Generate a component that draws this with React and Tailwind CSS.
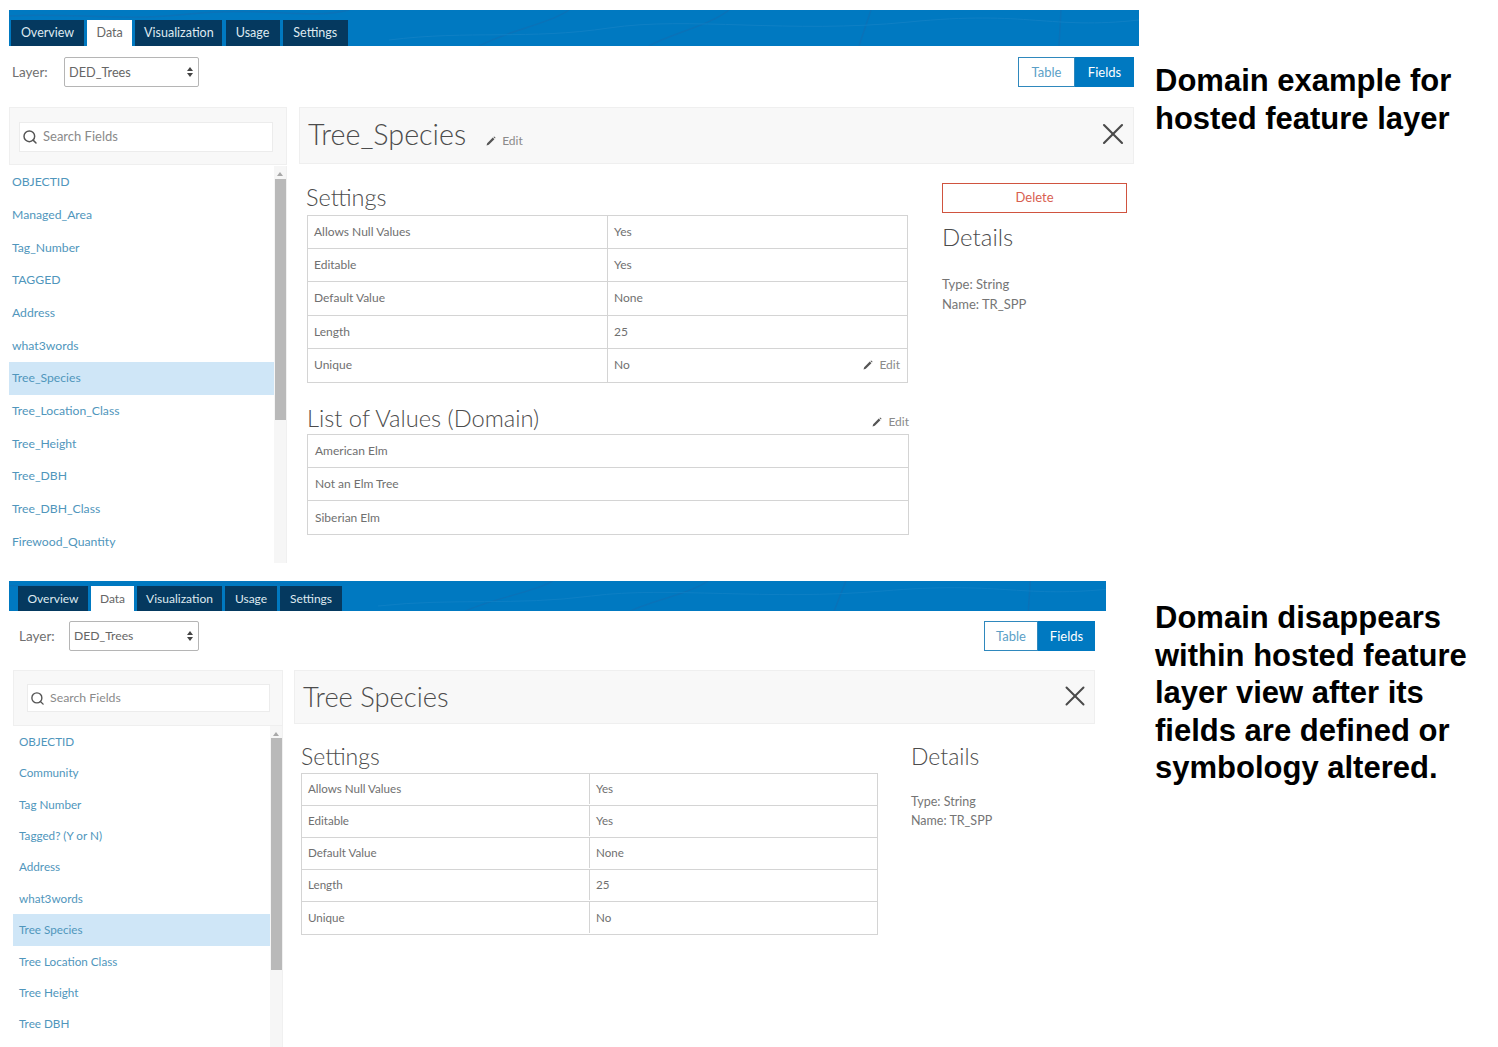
import { Search, X } from 'lucide-react';

const tabs = ['Overview', 'Data', 'Visualization', 'Usage', 'Settings'];

const fieldsTop = ['OBJECTID', 'Managed_Area', 'Tag_Number', 'TAGGED', 'Address', 'what3words', 'Tree_Species', 'Tree_Location_Class', 'Tree_Height', 'Tree_DBH', 'Tree_DBH_Class', 'Firewood_Quantity'];
const fieldsBottom = ['OBJECTID', 'Community', 'Tag Number', 'Tagged? (Y or N)', 'Address', 'what3words', 'Tree Species', 'Tree Location Class', 'Tree Height', 'Tree DBH'];

const settings = [
  ['Allows Null Values', 'Yes'],
  ['Editable', 'Yes'],
  ['Default Value', 'None'],
  ['Length', '25'],
  ['Unique', 'No'],
];

const domain = ['American Elm', 'Not an Elm Tree', 'Siberian Elm'];

function Pencil() {
  return (
    <svg width="10" height="10" viewBox="0 0 10 10" className="shrink-0">
      <path d="M0.5 9.5 L1.2 7.2 L6.8 1.6 L8.4 3.2 L2.8 8.8 Z M7.4 1 L8.2 0.4 L9.6 1.8 L9 2.6 Z" fill="#555" />
    </svg>
  );
}

function Edit({ className }) {
  return (
    <span className={`flex items-center gap-[6px] text-[12px] text-[#8a8a8a] ${className}`}>
      <Pencil />
      Edit
    </span>
  );
}

function BarLines() {
  return (
    <svg className="absolute inset-0 w-full h-full" preserveAspectRatio="none" viewBox="0 0 1130 36">
      <path d="M0 6 C60 2 110 12 180 4 S300 10 340 0 M470 36 C500 20 540 14 560 0 M640 36 C660 24 700 16 720 0 M850 36 L862 0 M1050 36 L1052 0" fill="none" stroke="#0a72b8" strokeWidth="1.5" />
      <path d="M380 30 C460 20 520 30 600 18 S780 24 900 12 S1040 20 1130 10" fill="none" stroke="#0f80c5" strokeWidth="1" />
    </svg>
  );
}

function TabBar({ barClass, tabClass, tabClasses }) {
  return (
    <div className={`relative flex items-end bg-[#0079c1] overflow-hidden ${barClass}`}>
      <BarLines />
      {tabs.map((t, i) => (
        <div
          key={t}
          className={`relative flex items-center justify-center pt-[1px] ${tabClass} ${tabClasses[i]} ${t === 'Data' ? 'bg-white text-[#666]' : 'bg-[#05395f] text-[#dfe9f0]'}`}
        >
          {t}
        </div>
      ))}
    </div>
  );
}

function SelectBox({ className }) {
  return (
    <div className={`flex items-center justify-between h-[30px] border border-[#b5b5b5] rounded-[2px] pl-[4px] pr-[5px] text-[#666] ${className}`}>
      <span className="pt-[1px]">DED_Trees</span>
      <svg width="6" height="10" viewBox="0 0 6 10">
        <path d="M3 0 L6 4 H0 Z M0 6 H6 L3 10 Z" fill="#444" />
      </svg>
    </div>
  );
}

function Toggle({ tableClass, fieldsClass }) {
  return (
    <div className="flex h-[30px] text-[13px]">
      <div className={`flex items-center justify-center pt-[1px] border border-[#2f88bd] text-[#5b9fc7] ${tableClass}`}>Table</div>
      <div className={`flex items-center justify-center pt-[1px] bg-[#0079c1] text-white ${fieldsClass}`}>Fields</div>
    </div>
  );
}

function Sidebar({ width, headClass, searchClass, iconSize, items, itemClass, selected, listClass, thumbClass }) {
  return (
    <div className={`shrink-0 ${width}`}>
      <div className={`flex items-center bg-[#f8f8f8] border border-[#efefef] ${headClass}`}>
        <div className={`flex items-center bg-white border border-[#ececec] text-[#8a8a8a] ${searchClass}`}>
          <Search size={iconSize} strokeWidth={2.2} color="#555" className="shrink-0" />
          <span className="ml-[5px] pt-[1px]">Search Fields</span>
        </div>
      </div>
      <div className={`flex overflow-hidden ${listClass}`}>
        <div className="flex-1 overflow-hidden">
          {items.map((f) => (
            <div
              key={f}
              className={`flex items-center text-[#5096bc] ${itemClass} ${f === selected ? 'bg-[#cfe6f7]' : ''}`}
            >
              {f}
            </div>
          ))}
        </div>
        <div className="shrink-0 w-[12px] bg-[#f6f6f6]">
          <div className="flex justify-center pt-[6px] h-[14px]">
            <svg width="6" height="4" viewBox="0 0 6 4"><path d="M3 0 L6 4 H0 Z" fill="#a8a8a8" /></svg>
          </div>
          <div className={`bg-[#b9b9b9] ml-[1px] ${thumbClass}`} />
        </div>
        <div className="w-[1px] bg-[#f0f0f0]" />
      </div>
    </div>
  );
}

function Row({ children, className, last }) {
  return (
    <div className={`flex items-center text-[#707070] ${className} ${last ? '' : 'border-b border-[#d4d4d4]'}`}>
      {children}
    </div>
  );
}

function SettingsTable({ width, rowClass, labelWidth, edit }) {
  return (
    <div className={`border border-[#d4d4d4] ${width}`}>
      {settings.map(([k, v], i) => (
        <Row key={k} className={rowClass} last={i === settings.length - 1}>
          <div className={`flex items-center h-full pl-[6px] border-r border-[#d4d4d4] ${labelWidth}`}>{k}</div>
          <div className="flex flex-1 items-center justify-between pl-[6px] pr-[7px]">
            {v}
            {edit && i === settings.length - 1 && <Edit className="text-[12.5px]" />}
          </div>
        </Row>
      ))}
    </div>
  );
}

function Details({ headClass, lineClass }) {
  return (
    <>
      <div className={`font-light leading-[30px] text-[#4c4c4c] ${headClass}`}>Details</div>
      <div className={`text-[#757575] ${lineClass}`}>Type: String</div>
      <div className={`text-[#757575] ${lineClass}`}>Name: TR_SPP</div>
    </>
  );
}

function Note({ children, className }) {
  return (
    <div className={`font-['Liberation_Sans',Arial,sans-serif] font-bold text-[31px] text-black ${className}`}>
      {children}
    </div>
  );
}

export default function App() {
  return (
    <div className="w-[1498px] h-[1047px] overflow-hidden bg-white font-['Lato','Open_Sans',sans-serif]">
      {/* hosted feature layer */}
      <section className="flex h-[581px] pl-[9px] pt-[10px]">
        <div className="w-[1146px] shrink-0">
          <TabBar
            barClass="w-[1130px] h-[36px] pl-[2px] gap-[3.2px]"
            tabClass="h-[26px] text-[12.5px]"
            tabClasses={['w-[73px]', 'w-[45px]', 'w-[87px]', 'w-[54px]', 'w-[65px]']}
          />
          <div className="flex items-center justify-between w-[1125px] mt-[11px]">
            <div className="flex items-center">
              <span className="w-[55px] pl-[3px] text-[13.5px] text-[#707070]">Layer:</span>
              <SelectBox className="w-[135px] text-[12.7px]" />
            </div>
            <Toggle tableClass="w-[57px]" fieldsClass="w-[59px]" />
          </div>
          <div className="flex gap-[12px] w-[1125px] mt-[20px]">
            <Sidebar
              width="w-[278px]"
              headClass="h-[58px] pl-[9px] pt-[1px]"
              searchClass="w-[254px] h-[30px] text-[13px] pl-[2px]"
              iconSize={16}
              items={fieldsTop}
              selected="Tree_Species"
              itemClass="h-[32.7px] pl-[3px] text-[12.2px]"
              listClass="h-[398px] pt-[1px]"
              thumbClass="h-[241px] -mt-[1px]"
            />
            <div className="flex-1">
              <div className="flex items-center justify-between h-[57px] bg-[#f8f8f8] border border-[#efefef] pl-[8px] pr-[2px]">
                <div className="flex items-center">
                  <span className="-mt-[1px] text-[28.7px] font-light text-[#4c4c4c]">Tree_Species</span>
                  <Edit className="ml-[20px] mt-[11px]" />
                </div>
                <X size={36} strokeWidth={1.4} color="#4a4a4a" className="-mt-[3px]" />
              </div>
              <div className="flex pl-[7px] pt-[18px]">
                <div className="w-[636px] shrink-0">
                  <div className="h-[33px] text-[23.5px] font-light leading-[30px] text-[#4c4c4c]">Settings</div>
                  <div className="pl-[1px]">
                    <SettingsTable width="w-[601px]" rowClass="h-[33.2px] text-[12px]" labelWidth="w-[300px]" edit />
                    <div className="flex items-end justify-between w-[602px] h-[51px]">
                      <span className="-mt-[1px] pb-[1px] text-[23.7px] font-light leading-[30px] text-[#4c4c4c]">List of Values (Domain)</span>
                      <Edit className="mb-[3px]" />
                    </div>
                    <div className="w-[602px] border border-[#d4d4d4]">
                      {domain.map((d, i) => (
                        <Row key={d} className="h-[33px] pl-[7px] pt-[1px] text-[12px]" last={i === domain.length - 1}>{d}</Row>
                      ))}
                    </div>
                  </div>
                </div>
                <div className="w-[185px] pt-[1px]">
                  <div className="flex items-center justify-center h-[30px] border border-[#d0533f] text-[13px] text-[#d8604f]">Delete</div>
                  <div className="mt-[9px]">
                    <Details headClass="text-[24px] mb-[22px]" lineClass="h-[20px] leading-[20px] text-[13px]" />
                  </div>
                </div>
              </div>
            </div>
          </div>
        </div>
        <Note className="pt-[52px] leading-[38px]">Domain example for<br />hosted feature layer</Note>
      </section>

      {/* hosted feature layer view */}
      <section className="flex pl-[9px]">
        <div className="w-[1146px] shrink-0">
          <TabBar
            barClass="w-[1097px] h-[30px] pl-[9px] gap-[3px]"
            tabClass="h-[25px] text-[12px]"
            tabClasses={['w-[70px]', 'w-[43px]', 'w-[85px]', 'w-[52px]', 'w-[62px]']}
          />
          <div className="flex items-center justify-between w-[1086px] mt-[10px] pl-[10px]">
            <div className="flex items-center">
              <span className="w-[50px] text-[13.5px] text-[#707070]">Layer:</span>
              <SelectBox className="w-[130px] text-[12.2px]" />
            </div>
            <Toggle tableClass="w-[54px]" fieldsClass="w-[57px]" />
          </div>
          <div className="flex gap-[11px] w-[1082px] ml-[4px] mt-[19px]">
            <Sidebar
              width="w-[270px]"
              headClass="h-[56px] pl-[13px]"
              searchClass="w-[243px] h-[28px] text-[12.3px] pl-[2px]"
              iconSize={15}
              items={fieldsBottom}
              selected="Tree Species"
              itemClass="h-[31.4px] pl-[6px] text-[11.7px]"
              listClass="h-[321px]"
              thumbClass="h-[232px] -mt-[2px]"
            />
            <div className="flex-1">
              <div className="flex items-center justify-between h-[54px] bg-[#f8f8f8] border border-[#efefef] pl-[8px] pr-[2px]">
                <span className="mt-[1px] text-[27.3px] font-light text-[#4c4c4c]">Tree Species</span>
                <X size={34} strokeWidth={1.4} color="#4a4a4a" className="-mt-[2px]" />
              </div>
              <div className="flex pl-[7px] pt-[17px]">
                <div className="w-[610px] shrink-0">
                  <div className="h-[32px] text-[23px] font-light leading-[30px] text-[#4c4c4c]">Settings</div>
                  <SettingsTable width="w-[577px]" rowClass="h-[32px] pb-[1px] text-[11.6px]" labelWidth="w-[288px]" />
                </div>
                <div>
                  <Details headClass="text-[23px] mb-[21px]" lineClass="h-[19px] leading-[19px] text-[12.5px]" />
                </div>
              </div>
            </div>
          </div>
        </div>
        <Note className="pt-[18px] leading-[37.5px]">
          Domain disappears<br />within hosted feature<br />layer view after its<br />fields are defined or<br />symbology altered.
        </Note>
      </section>
    </div>
  );
}
